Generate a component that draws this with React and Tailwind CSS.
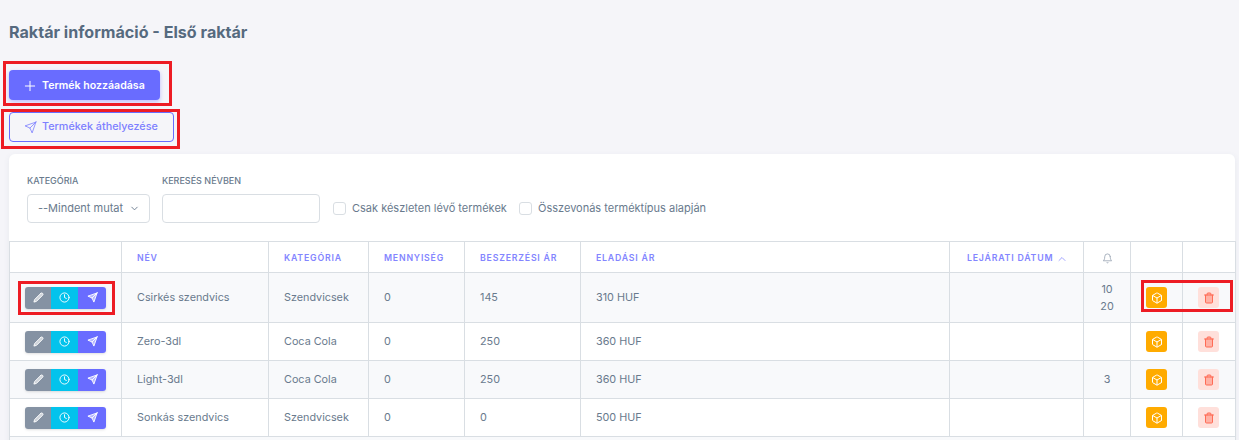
import { FiBell, FiBox, FiChevronDown, FiChevronUp, FiClock, FiEdit2, FiPlus, FiSend, FiTrash } from 'react-icons/fi';

const rows = [
  { name: 'Csirkés szendvics', cat: 'Szendvicsek', qty: 0, buy: 145, sell: '310 HUF', bell: ['10', '20'], h: 'h-[50px]', striped: true },
  { name: 'Zero-3dl', cat: 'Coca Cola', qty: 0, buy: 250, sell: '360 HUF', bell: [], h: 'h-[38px]' },
  { name: 'Light-3dl', cat: 'Coca Cola', qty: 0, buy: 250, sell: '360 HUF', bell: ['3'], h: 'h-[38px]', striped: true },
  { name: 'Sonkás szendvics', cat: 'Szendvicsek', qty: 0, buy: 0, sell: '500 HUF', bell: [], h: 'h-[38px]' },
];

const Th = ({ children, className = '' }) => (
  <th className={`whitespace-nowrap border border-[#d9dee3] px-[15px] pt-[3px] text-left text-[8.75px] font-semibold uppercase tracking-[0.8px] text-[#8385ff] ${className}`}>
    {children}
  </th>
);

const Td = ({ children, className = '' }) => (
  <td className={`border border-[#d9dee3] px-[15px] text-[10.8px] text-[#697a8d] ${className}`}>{children}</td>
);

const Row = ({ row }) => (
  <tr className={`${row.h} ${row.striped ? 'bg-[#f8f9fb]' : 'bg-white'}`}>
    <Td className="!px-0">
      <div className="ml-[15px] flex h-[22px] w-[81px] overflow-hidden rounded-[3px] text-white shadow-sm">
        <span className="flex w-[26px] items-center justify-center bg-[#8592a3]"><FiEdit2 size={11} className="fill-white/60" /></span>
        <span className="flex w-[27px] items-center justify-center bg-[#03c3ec]"><FiClock size={11} /></span>
        <span className="flex w-[28px] items-center justify-center bg-[#696cff]"><FiSend size={11} className="fill-white/50" /></span>
      </div>
    </Td>
    <Td className="pt-[1px]">{row.name}</Td>
    <Td className="pt-[1px]">{row.cat}</Td>
    <Td className="pt-[1px]">{row.qty}</Td>
    <Td className="pt-[1px]">{row.buy}</Td>
    <Td className="pt-[1px]">{row.sell}</Td>
    <Td />
    <Td className="!px-0 text-center leading-[17px]">
      {row.bell.map((b) => (
        <div key={b}>{b}</div>
      ))}
    </Td>
    <Td className="!px-0">
      <span className="mx-auto flex h-[21px] w-[21px] items-center justify-center rounded-[3px] bg-[#ffab00] text-white">
        <FiBox size={12} />
      </span>
    </Td>
    <Td className="!px-0">
      <span className="ml-[15px] flex h-[21px] w-[21px] items-center justify-center rounded-[3px] bg-[#ffe0db] text-[#ff6b55]">
        <FiTrash size={12} className="fill-[#ff6b55]/40" />
      </span>
    </Td>
  </tr>
);

export default function App() {
  return (
    <div className="relative h-[440px] overflow-hidden bg-[#f5f5f9] font-['Inter',sans-serif]">
      <div className="px-[9px] pt-[22px]">
        <h1 className="h-[20px] text-[16.1px] font-bold leading-[20px] text-[#566a7f]">Raktár információ - Első raktár</h1>

        <button className="mt-[28px] flex h-[30px] w-[151px] items-center rounded-[4px] bg-[#696cff] pl-[13px] pt-[1px] text-[10.6px] font-semibold text-white shadow-[0_2px_4px_rgba(105,108,255,0.4)]">
          <FiPlus size={16} strokeWidth={1.5} className="mr-[4px]" />
          Termék hozzáadása
        </button>
        <button className="mt-[12px] flex h-[30px] w-[165px] items-center rounded-[4px] border border-[#696cff] pl-[14px] text-[10.8px] font-medium text-[#7d7fff]">
          <FiSend size={13} strokeWidth={1.5} className="mr-[5px]" />
          Termékek áthelyezése
        </button>

        <div className="mt-[12px] w-[1226px] rounded-t-[6px] bg-white shadow-[0_2px_6px_rgba(67,89,113,0.08)]">
          <div className="flex h-[87px] items-start pl-[18px] pt-[21px]">
            <div className="mr-[12px] w-[123px]">
              <label className="block h-[19px] text-[9px] font-medium uppercase leading-[12px] text-[#697a8d]">Kategória</label>
              <div className="flex h-[29px] items-center justify-between rounded-[4px] border border-[#d9dee3] pl-[10px] pr-[9px] text-[11px] text-[#697a8d]">
                --Mindent mutat
                <FiChevronDown size={11} className="shrink-0" />
              </div>
            </div>
            <div className="mr-[13px] w-[158px]">
              <label className="block h-[19px] text-[9px] font-medium uppercase leading-[12px] text-[#697a8d]">Keresés névben</label>
              <div className="h-[29px] rounded-[4px] border border-[#d9dee3]" />
            </div>
            <div className="flex h-[29px] translate-y-[19px] items-center text-[11px] text-[#697a8d]">
              <span className="mr-[6px] h-[13px] w-[13px] rounded-[3px] border border-[#d9dee3]" />
              <span className="mr-[12px] w-[155px] whitespace-nowrap">Csak készleten lévő termékek</span>
              <span className="mr-[6px] h-[13px] w-[13px] rounded-[3px] border border-[#d9dee3]" />
              <span>Összevonás terméktípus alapján</span>
            </div>
          </div>

          <table className="w-[1226px] table-fixed border-collapse">
            <colgroup>
              <col className="w-[112px]" />
              <col className="w-[147px]" />
              <col className="w-[100px]" />
              <col className="w-[96px]" />
              <col className="w-[116px]" />
              <col className="w-[369px]" />
              <col className="w-[134px]" />
              <col className="w-[47px]" />
              <col className="w-[52px]" />
              <col className="w-[53px]" />
            </colgroup>
            <thead>
              <tr className="h-[31px]">
                <Th />
                <Th>Név</Th>
                <Th>Kategória</Th>
                <Th>Mennyiség</Th>
                <Th>Beszerzési ár</Th>
                <Th>Eladási ár</Th>
                <Th className="!pl-[17px]">
                  <span className="flex items-center gap-[3px]">
                    Lejárati dátum <FiChevronUp size={12} strokeWidth={1.5} className="shrink-0" />
                  </span>
                </Th>
                <Th>
                  <FiBell size={11} strokeWidth={1.5} className="mx-auto text-[#8592a3]" />
                </Th>
                <Th />
                <Th />
              </tr>
            </thead>
            <tbody>
              {rows.map((row) => (
                <Row key={row.name} row={row} />
              ))}
              <tr className="h-[38px] bg-[#f8f9fb]">
                <td colSpan={10} className="border border-[#d9dee3]" />
              </tr>
            </tbody>
          </table>
        </div>
      </div>

      {/* red markers drawn over the screenshot */}
      <div className="absolute left-[3px] top-[61px] h-[45px] w-[169px] border-[3px] border-[#ed1c24]" />
      <div className="absolute left-[1px] top-[109px] h-[40px] w-[179px] border-[3px] border-[#ed1c24]" />
      <div className="absolute left-[18px] top-[281px] h-[34px] w-[97px] border-[3px] border-[#ed1c24]" />
      <div className="absolute left-[1141px] top-[280px] h-[32px] w-[92px] border-[3px] border-[#ed1c24]" />
    </div>
  );
}
